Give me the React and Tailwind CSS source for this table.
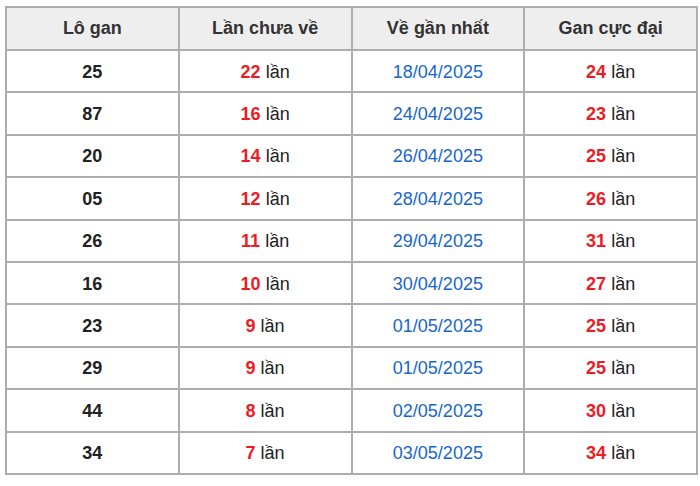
const rows = [
  ['25', '22', '18/04/2025', '24'],
  ['87', '16', '24/04/2025', '23'],
  ['20', '14', '26/04/2025', '25'],
  ['05', '12', '28/04/2025', '26'],
  ['26', '11', '29/04/2025', '31'],
  ['16', '10', '30/04/2025', '27'],
  ['23', '9', '01/05/2025', '25'],
  ['29', '9', '01/05/2025', '25'],
  ['44', '8', '02/05/2025', '30'],
  ['34', '7', '03/05/2025', '34'],
];

const cell = 'border-2 border-[#adadad] text-center align-middle';

const App = () => {
  return (
    <div className="bg-white min-h-screen pt-[6px] pl-[5px]" style={{ fontFamily: '"Liberation Sans", Arial, sans-serif' }}>
      <table className="w-[693px] border-collapse table-fixed text-[18px] text-[#222]">
        <thead>
          <tr className="h-[43px] bg-[#eeeeee]">
            <th className={`${cell} font-bold text-[#333]`}>Lô gan</th>
            <th className={`${cell} font-bold text-[#333]`}>Lần chưa về</th>
            <th className={`${cell} font-bold text-[#333]`}>Về gần nhất</th>
            <th className={`${cell} font-bold text-[#333]`}>Gan cực đại</th>
          </tr>
        </thead>
        <tbody>
          {rows.map(([lo, chua, ngay, max], i) => (
            <tr key={i} className="h-[42.4px]">
              <td className={`${cell} font-bold pt-[2px]`}>{lo}</td>
              <td className={`${cell} pt-[2px]`}>
                <span className="font-bold text-[#ed1c24]">{chua}</span> lần
              </td>
              <td className={`${cell} text-[#1766cc] pt-[2px]`}>{ngay}</td>
              <td className={`${cell} pt-[2px]`}>
                <span className="font-bold text-[#ed1c24]">{max}</span> lần
              </td>
            </tr>
          ))}
        </tbody>
      </table>
    </div>
  );
};

export default App;
